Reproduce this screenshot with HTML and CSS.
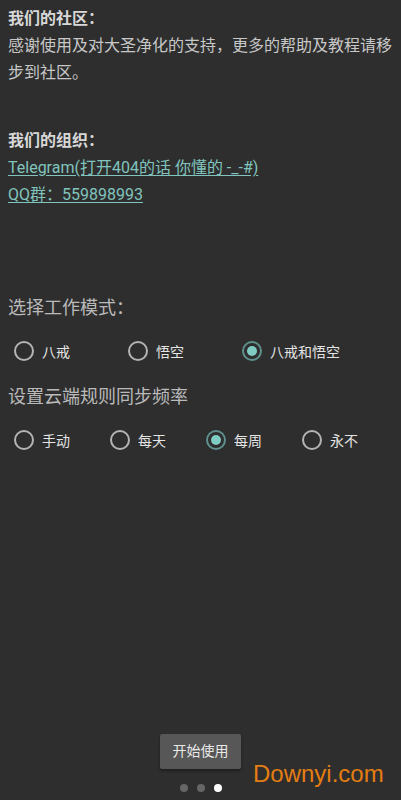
FILE: index.html
```html
<!doctype html>
<html>
<head>
<meta charset="utf-8">
<title>大圣净化</title>
<link rel="stylesheet" href="styles.css">
</head>
<body>
<div class="page">
	<div class="intro">
		<p class="title">我们的社区：</p>
		<p class="text">感谢使用及对大圣净化的支持，更多的帮助及教程请移步到社区。</p>

		<p class="title title2">我们的组织：</p>
		<p class="text"><a class="link" href="#">Telegram(打开404的话 你懂的 -_-#)</a></p>
		<p class="text"><a class="link" href="#">QQ群：559898993</a></p>
	</div>

	<p class="label label1">选择工作模式：</p>
	<div class="radios mode">
		<label class="radio"><span class="dot"></span>八戒</label>
		<label class="radio"><span class="dot"></span>悟空</label>
		<label class="radio on"><span class="dot"></span>八戒和悟空</label>
	</div>

	<p class="label">设置云端规则同步频率</p>
	<div class="radios sync">
		<label class="radio"><span class="dot"></span>手动</label>
		<label class="radio"><span class="dot"></span>每天</label>
		<label class="radio on"><span class="dot"></span>每周</label>
		<label class="radio"><span class="dot"></span>永不</label>
	</div>

	<div class="foot">
		<span class="start">开始使用</span>
		<ul class="pager">
			<li></li>
			<li></li>
			<li class="active"></li>
		</ul>
	</div>
</div>
<div class="mark">Downyi.com</div>
</body>
</html>
```

FILE: styles.css
```css
* { padding: 0; margin: 0; box-sizing: border-box; }
li { list-style: none; }
body { background: #2e2e2e; font-family: Roboto, "Noto Sans CJK SC", sans-serif; color: #c8c8c8; }
.page { min-height: 800px; display: flex; flex-direction: column; padding: 5px 8px 8px 8px; position: relative; }

.intro { font-size: 16px; line-height: 27px; }
.intro .title { font-weight: bold; color: #d8d8d8; }
.intro .title2 { margin-top: 41px; }
.intro .link { color: #80c4bd; text-decoration: underline; text-underline-offset: 2px; }

.label { font-size: 18px; line-height: 27px; color: #bababa; }
.label1 { margin-top: 86px; }

.radios { display: flex; height: 32px; align-items: center; margin: 14px 0 16px 0; }
.radio { display: flex; align-items: center; font-size: 14px; color: #e4e4e4; padding-left: 6px; }
.mode .radio { width: 114px; }
.sync .radio { width: 96px; }
.radio .dot { width: 20px; height: 20px; border: 2px solid #b4b4b4; border-radius: 50%; margin-right: 8px; position: relative; }
.radio.on .dot { border-color: #5f8f8a; }
.radio.on .dot::after { content: ''; position: absolute; left: 3px; top: 3px; width: 10px; height: 10px; border-radius: 50%; background: #80cbc4; }

.foot { margin-top: auto; display: flex; flex-direction: column; align-items: center; }
.start { width: 81px; height: 35px; line-height: 35px; text-align: center; font-size: 14px; color: #e8e8e8; background: #575757; border-radius: 2px; box-shadow: 0 2px 3px rgba(0,0,0,0.35); }
.pager { display: flex; gap: 9px; margin-top: 15px; }
.pager li { width: 8px; height: 8px; border-radius: 50%; background: #666; }
.pager li.active { background: #fff; }

.mark { position: absolute; left: 253px; top: 760px; font-family: "Liberation Sans", Arial, sans-serif; font-size: 24px; color: #e47d12; }
```
